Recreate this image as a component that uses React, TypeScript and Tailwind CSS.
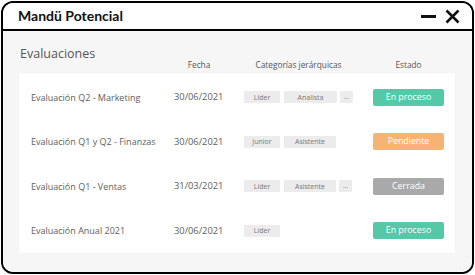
import React from 'react';

type Row = {
    name: string;
    date: string;
    tags: { label: string; w: string }[];
    more: boolean;
    status: 'proceso' | 'pendiente' | 'cerrada';
};

const rows: Row[] = [
    { name: 'Evaluación Q2 - Marketing', date: '30/06/2021', tags: [{ label: 'Líder', w: 'w-[36px]' }, { label: 'Analista', w: 'w-[53px]' }], more: true, status: 'proceso' },
    { name: 'Evaluación Q1 y Q2 - Finanzas', date: '30/06/2021', tags: [{ label: 'Junior', w: 'w-[36px]' }, { label: 'Asistente', w: 'w-[52px]' }], more: false, status: 'pendiente' },
    { name: 'Evaluación Q1 - Ventas', date: '31/03/2021', tags: [{ label: 'Líder', w: 'w-[36px]' }, { label: 'Asistente', w: 'w-[52px]' }], more: true, status: 'cerrada' },
    { name: 'Evaluación Anual 2021', date: '30/06/2021', tags: [{ label: 'Líder', w: 'w-[36px]' }], more: false, status: 'proceso' },
];

const statusStyle = {
    proceso: { label: 'En proceso', cls: 'bg-[#55c8a8]' },
    pendiente: { label: 'Pendiente', cls: 'bg-[#f5b474]' },
    cerrada: { label: 'Cerrada', cls: 'bg-[#a9a9a9]' },
};

const App = () => {
    return (
        <div className="w-[475px] h-[275px] bg-white p-[1px] font-['Open_Sans',sans-serif]">
            <div className="h-full border-2 border-black rounded-[12px] overflow-hidden flex flex-col">
                {/* title bar */}
                <div className="h-[28px] shrink-0 bg-white border-b-2 border-black flex items-center justify-between pl-[15px] pr-[12px]">
                    <span className="font-['Lato',sans-serif] text-[14px] font-bold text-[#111] leading-none mb-[1px]">Mandü Potencial</span>
                    <div className="flex items-center gap-[8px]">
                        <svg width="17" height="14" viewBox="0 0 17 14">
                            <path d="M1 7.5 H16" stroke="#111" strokeWidth="3" />
                        </svg>
                        <svg width="15" height="15" viewBox="0 0 15 15">
                            <path d="M1.5 1.5 L13.5 13.5 M13.5 1.5 L1.5 13.5" stroke="#111" strokeWidth="2.6" />
                        </svg>
                    </div>
                </div>

                {/* content */}
                <div className="flex-1 bg-[#f6f6f6] pl-[16px] pr-[17px]">
                    <div className="h-[42px] flex items-end text-[#555]">
                        <div className="w-[155px] text-[12.5px] leading-none pb-[13px] pl-[1px]">Evaluaciones</div>
                        <div className="w-[50px] text-center text-[8.3px] leading-none pb-[4px]">Fecha</div>
                        <div className="w-[20px]" />
                        <div className="w-[109px] text-center text-[8.3px] leading-none pb-[4px]">Categorías jerárquicas</div>
                        <div className="w-[20px]" />
                        <div className="w-[71px] text-center text-[8.3px] leading-none pb-[4px]">Estado</div>
                    </div>

                    <div className="bg-white pt-[2px] shadow-[0_0_2px_rgba(0,0,0,0.04)]">
                        {rows.map((r) => {
                            const s = statusStyle[r.status];
                            return (
                                <div key={r.name} className="h-[44.5px] flex items-center pl-[12px] text-[9px] text-[#5e5e5e]">
                                    <div className="w-[143px]">{r.name}</div>
                                    <div className="w-[70px] text-[9.3px]">{r.date}</div>
                                    <div className="w-[129px] flex items-center gap-[4px]">
                                        {r.tags.map((t) => (
                                            <span key={t.label} className={`${t.w} h-[12px] bg-[#ececec] rounded-[1px] text-[7px] text-[#777] flex items-center justify-center leading-none`}>
                                                {t.label}
                                            </span>
                                        ))}
                                        {r.more && (
                                            <span className="w-[13px] h-[12px] bg-[#ececec] rounded-[1px] text-[6.5px] text-[#888] flex items-center justify-center leading-none ml-[-1px]">
                                                ...
                                            </span>
                                        )}
                                    </div>
                                    <div className={`w-[71px] h-[17px] ${s.cls} rounded-[2px] text-white text-[8.8px] flex items-center justify-center leading-none`}>
                                        {s.label}
                                    </div>
                                </div>
                            );
                        })}
                    </div>
                </div>
            </div>
        </div>
    );
};

export default App;
